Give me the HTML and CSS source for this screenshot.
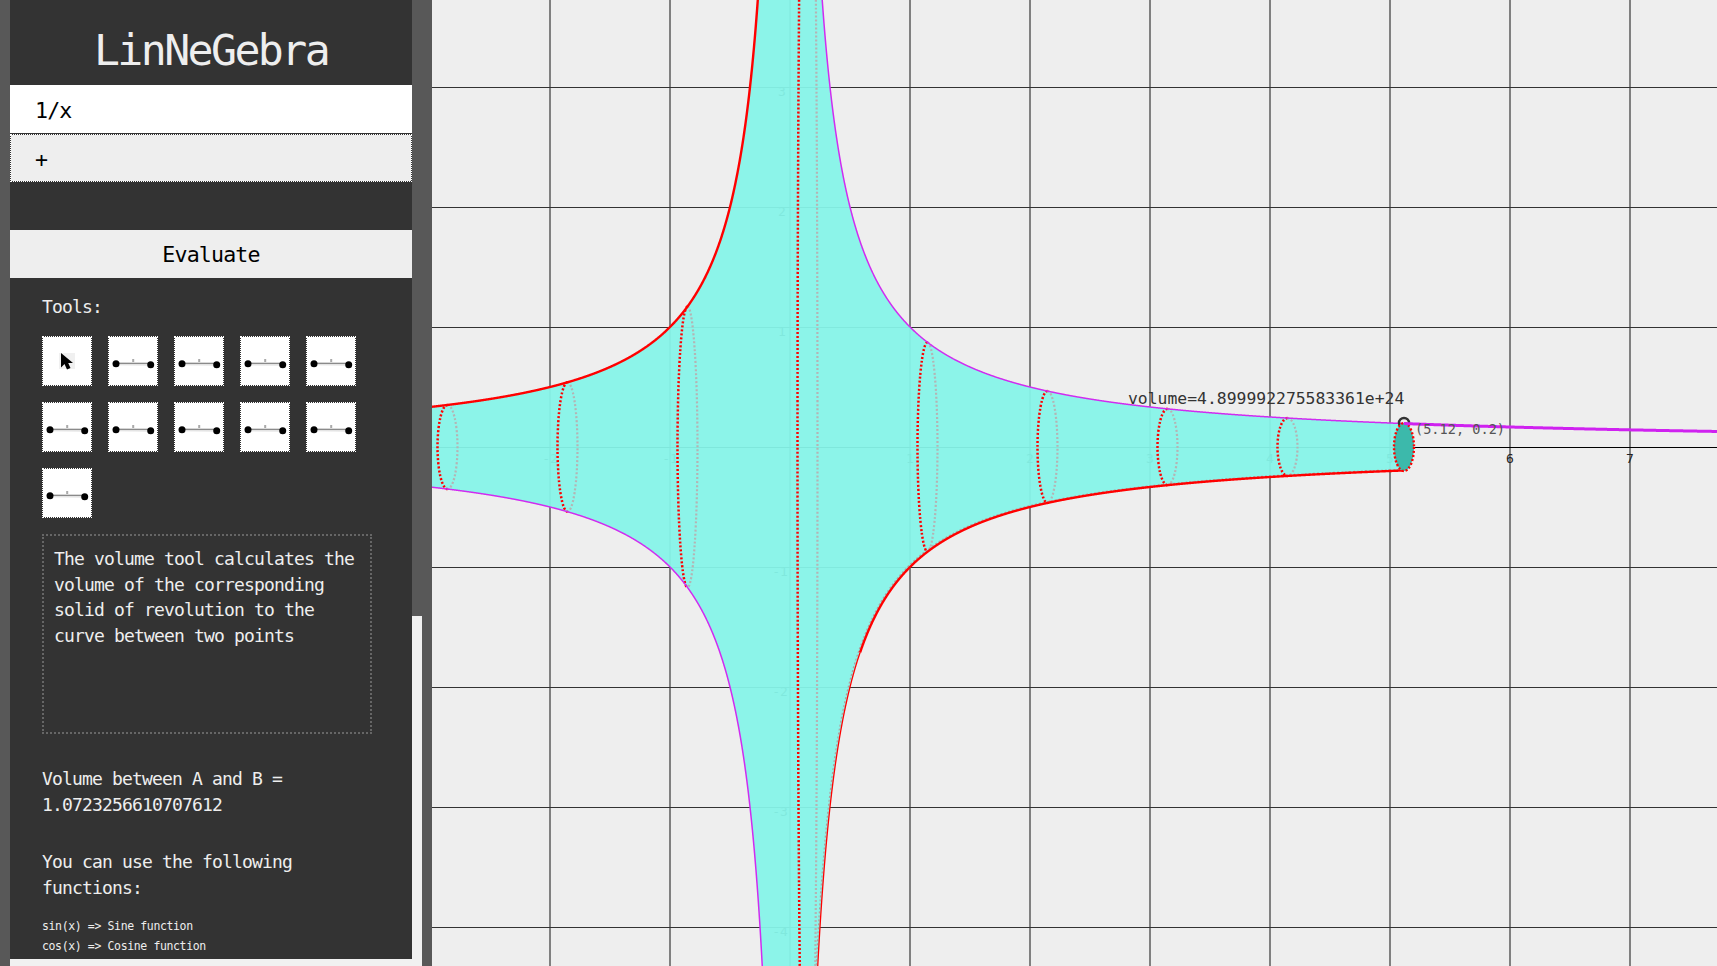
FILE: index.html
```html
<!DOCTYPE html>
<html lang="en">
<head>
<meta charset="utf-8">
<title>LinNeGebra</title>
<link rel="stylesheet" href="styles.css">
</head>
<body>
<svg class="defs" aria-hidden="true">
  <symbol id="ico-cursor" viewBox="0 0 48 48">
    <rect x="16" y="16" width="16" height="16" fill="#f0f0f0"/>
    <path d="M18 16V30.5L21.5 27L24 32.5L27.5 31L25.2 26H30Z" fill="#000"/>
  </symbol>
  <symbol id="ico-seg" viewBox="0 0 48 48">
    <path d="M7 26.8L41.7 27.3" stroke="#e4e4e4" stroke-width="3" fill="none"/>
    <path d="M7 26.3H41.7" stroke="#8a8a8a" stroke-width="1.2" fill="none"/>
    <rect x="23.2" y="22" width="2" height="3" fill="#aaa"/>
    <circle cx="7" cy="26.7" r="3.5" fill="#000"/>
    <circle cx="41.7" cy="27.7" r="3.5" fill="#000"/>
  </symbol>
</svg>
<div class="app">
  <div class="rail"></div>
  <div class="side-wrap">
    <div class="side-row">
      <aside class="sidebar">
        <h1 class="title">LinNeGebra</h1>
        <div class="field field-input">1/x</div>
        <div class="field field-add">+</div>
        <div class="evaluate">Evaluate</div>
        <div class="panel">
          <div class="tools-label">Tools:</div>
          <div class="tools">
            <div class="tool"><svg class="tool-ico"><use href="#ico-cursor"/></svg></div>
            <div class="tool"><svg class="tool-ico"><use href="#ico-seg"/></svg></div>
            <div class="tool"><svg class="tool-ico"><use href="#ico-seg"/></svg></div>
            <div class="tool"><svg class="tool-ico"><use href="#ico-seg"/></svg></div>
            <div class="tool"><svg class="tool-ico"><use href="#ico-seg"/></svg></div>
            <div class="tool"><svg class="tool-ico"><use href="#ico-seg"/></svg></div>
            <div class="tool"><svg class="tool-ico"><use href="#ico-seg"/></svg></div>
            <div class="tool"><svg class="tool-ico"><use href="#ico-seg"/></svg></div>
            <div class="tool"><svg class="tool-ico"><use href="#ico-seg"/></svg></div>
            <div class="tool"><svg class="tool-ico"><use href="#ico-seg"/></svg></div>
            <div class="tool"><svg class="tool-ico"><use href="#ico-seg"/></svg></div>
          </div>
          <div class="desc">The volume tool calculates the volume of the corresponding solid of revolution to the curve between two points</div>
          <p class="para">Volume between A and B = 1.0723256610707612</p>
          <p class="para">You can use the following functions:</p>
          <ul class="funcs">
            <li>sin(x) =&gt; Sine function</li>
            <li>cos(x) =&gt; Cosine function</li>
          </ul>
        </div>
      </aside>
      <div class="scrollbar"><div class="thumb"></div></div>
    </div>
  </div>
  <div class="rail"></div>
  <main class="plot">
    <svg class="plot-svg" viewBox="432 0 1285 966" width="1285" height="966">
      <path class="grid-v" d="M550 0V966M670 0V966M790 0V966M910 0V966M1030 0V966M1150 0V966M1270 0V966M1390 0V966M1510 0V966M1630 0V966"/>
      <path class="grid-h" d="M432 87.5H1717M432 207.5H1717M432 327.5H1717M432 567.5H1717M432 687.5H1717M432 807.5H1717M432 927.5H1717"/>
      <path class="axis" d="M432 447.5H1717"/>
      <g class="ticks">
        <text x="550" y="463">-2</text><text x="670" y="463">-1</text>
        <text x="910" y="463">1</text><text x="1030" y="463">2</text>
        <text x="1150" y="463">3</text><text x="1270" y="463">4</text>
        <text x="1390" y="463">5</text><text x="1510" y="463">6</text>
        <text x="1630" y="463">7</text>
        <text x="782" y="96">3</text><text x="782" y="216">2</text><text x="782" y="336">1</text>
        <text x="780" y="696">-2</text><text x="780" y="816">-3</text><text x="780" y="936">-4</text>
        <text x="780" y="576">-1</text>
      </g>
      <path id="solid" class="solid"/>
      <path id="edge" class="edge"/>
      <g id="slices"></g>
      <path id="curve-ul" class="curve-red"/>
      <path id="curve-lr" class="curve-red"/>
      <path id="curve-lr-steep" class="curve-red-thin"/>
      <path id="curve-ur" class="curve-purple"/>
      <path id="curve-ll" class="curve-purple"/>
      <circle class="point" cx="1404" cy="423" r="5"/>
      <ellipse class="disc" cx="1404" cy="447" rx="10" ry="24"/>
      <path id="curve-out" class="curve-out"/>
      <text class="vol-label" x="1128" y="404">volume=4.899992275583361e+24</text>
      <text class="pt-label" x="1415" y="434">(5.12, 0.2)</text>
    </svg>
  </main>
</div>
<script src="script.js"></script>
</body>
</html>
```
FILE: styles.css
```css
* { box-sizing: border-box; }
html, body { margin: 0; height: 100%; overflow: hidden; background: #eee; }
.defs { position: absolute; width: 0; height: 0; }

.app { display: flex; height: 100vh; }
.rail { width: 10px; flex: none; background: #585858; }
.side-wrap { width: 412px; flex: none; height: 100%; background: #f1f1f1; }
.side-row { display: flex; height: 959px; }
.sidebar {
  width: 402px; flex: none; height: 100%; overflow: hidden; background: #333; color: #eee;
  font-family: "DejaVu Sans Mono", "Liberation Mono", monospace;
  font-size: 18px; letter-spacing: -0.0465em; line-height: 25.6px;
}
.scrollbar { width: 10px; flex: none; background: #f1f1f1; }
.thumb { height: 616px; background: #585858; }

.title { margin: 0; height: 85px; padding-top: 15px; font-size: 43.2px; font-weight: 400; letter-spacing: -0.06em; line-height: 70px; text-align: center; }
.field { height: 48px; font-size: 21.6px; line-height: 52px; color: #000; }
.field-input { background: #fff; padding-left: 25px; }
.field-add { margin-top: 1px; background: #eee; background-clip: padding-box; padding-left: 24px; line-height: 50px; border: 1px dotted #fff; }
.evaluate { margin-top: 48px; height: 48px; background: #eee; color: #000; font-size: 21.6px; line-height: 50px; text-align: center; }

.panel { padding: 16px 40px 0 32px; }
.tools-label { height: 26px; }
.tools { display: grid; grid-template-columns: repeat(5, 50px); gap: 16px; margin-top: 16px; }
.tool { width: 50px; height: 50px; background: #fff; background-clip: padding-box; border: 1px dotted #fff; }
.tool-ico { display: block; width: 48px; height: 48px; }
.desc { margin-top: 16px; height: 200px; padding: 10px; border: 2px dotted #666; }
.para { margin: 32px 0 0; }
.funcs { list-style: none; margin: 16px 0 0; padding: 0; font-size: 11.52px; letter-spacing: -0.033em; line-height: 20px; }

.plot { flex: 1; min-width: 0; height: 100%; background: #eee; overflow: hidden; }
.plot-svg { display: block; }
.grid-v { stroke: #808080; stroke-width: 2; fill: none; }
.grid-h { stroke: #333; stroke-width: 1; fill: none; }
.axis { stroke: #000; stroke-width: 1; fill: none; }
.ticks text { font-family: "DejaVu Sans Mono", monospace; font-size: 13px; text-anchor: middle; fill: #222; }
.solid { fill: rgb(134, 243, 232); fill-opacity: 0.95; stroke: none; }
.edge { fill: none; stroke: #b0a0a0; stroke-width: 1.2; stroke-dasharray: 2 2; }
.slice-front { fill: none; stroke: #f00; stroke-width: 2.5; stroke-dasharray: 2 2; }
.slice-back { fill: none; stroke: #b4b4b4; stroke-width: 2.2; stroke-dasharray: 2 2; }
.curve-red { fill: none; stroke: #f00; stroke-width: 2.4; }
.curve-red-thin { fill: none; stroke: #f00; stroke-width: 1.3; }
.curve-purple { fill: none; stroke: #d02cf0; stroke-width: 1.5; }
.curve-out { fill: none; stroke: #cf22f0; stroke-width: 3; }
.point { fill: none; stroke: #333; stroke-width: 2.5; }
.disc { fill: #3cb9ab; stroke: #f00; stroke-width: 2.4; stroke-dasharray: 2 2; }
.vol-label { font-family: "DejaVu Sans Mono", monospace; font-size: 16.4px; fill: #333; }
.pt-label { font-family: "DejaVu Sans Mono", monospace; font-size: 13.6px; fill: #555; }
```
FILE: script.js
```js
(function () {
  var X0 = 790, Y0 = 447, U = 120, LIM = 560;
  var NS = "http://www.w3.org/2000/svg";
  function radius(x) { return U * U / Math.abs(x - X0 || 0.01); }

  function line(x0, x1, sign) {
    var pts = [];
    for (var x = x0; x <= x1; x += 0.25) {
      var r = radius(x);
      if (r < LIM) pts.push(x.toFixed(2) + " " + (Y0 + sign * r).toFixed(2));
    }
    return "M" + pts.join("L");
  }
  function set(id, d) { document.getElementById(id).setAttribute("d", d); }

  var top = [], bottom = [];
  for (var x = 432; x <= 1404; x += 0.5) {
    var r = Math.min(radius(x), LIM);
    top.push(x + " " + (Y0 - r).toFixed(2));
    bottom.unshift(x + " " + (Y0 + r).toFixed(2));
  }
  set("solid", "M" + top.concat(bottom).join("L") + "Z");

  set("curve-ul", line(432, 789.5, -1));
  set("curve-ur", line(790.5, 1404, -1));
  set("curve-ll", line(432, 789.5, 1));
  set("curve-lr-steep", line(790.5, 860, 1));
  set("curve-lr", line(860, 1404, 1));
  set("curve-out", line(1404, 1717, -1));
  set("edge", line(790.5, 1404, 1).replace(/(\d+\.\d+) (\d+\.\d+)/g, function (m, a, b) {
    return (parseFloat(a) - 1.5) + " " + (parseFloat(b) - 1);
  }));

  var slices = document.getElementById("slices");
  function arc(cx, r, sweep, cls) {
    var p = document.createElementNS(NS, "path");
    p.setAttribute("class", cls);
    p.setAttribute("d", "M" + cx + " " + (Y0 - r) + "A10 " + r + " 0 0 " + sweep + " " + cx + " " + (Y0 + r));
    slices.appendChild(p);
  }
  for (var k = 0; k < 8; k++) {
    var cx = 447.5 + 120 * k;
    var rr = radius(cx);
    arc(cx, rr, 1, "slice-back");
    arc(cx, rr, 0, "slice-front");
  }
})();
```
